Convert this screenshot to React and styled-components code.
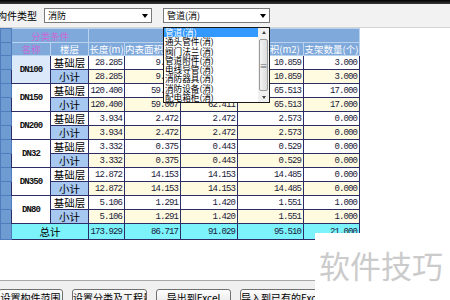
import React from "react";
import styled, { createGlobalStyle } from "styled-components";

const GlobalStyle = createGlobalStyle`
  html, body { margin: 0; padding: 0; }
  body {
    font-family: "Noto Sans CJK SC", "Noto Sans", sans-serif;
    background: #fff;
  }
`;

const Page = styled.div`
  width: 450px;
  height: 300px;
  position: relative;
  overflow: hidden;
  display: flex;
  flex-direction: column;
  background: #fff;
`;

const TopBar = styled.div`
  height: 4px;
  flex-shrink: 0;
  background: linear-gradient(#000, #3a3a3a);
`;

const Toolbar = styled.div`
  height: 24px;
  flex-shrink: 0;
  display: flex;
  align-items: center;
  background: #f2f2f2;
  border-bottom: 1px solid #d4d4d4;
  box-sizing: border-box;
`;

const Label = styled.span`
  font-size: 10px;
  width: 47px;
  margin-left: -3px;
  color: #000;
  white-space: nowrap;
`;

const Select = styled.div`
  width: ${(p) => p.$w}px;
  height: 15px;
  margin-right: ${(p) => p.$gap || 0}px;
  box-sizing: border-box;
  border: 1px solid #7a7a7a;
  background: #fff;
  display: flex;
  align-items: center;
  justify-content: space-between;
  padding: 0 3px 0 3px;
  font-size: 9px;
  color: #000;
`;

const Arrow = styled.span`
  width: 0;
  height: 0;
  border-left: 3px solid transparent;
  border-right: 3px solid transparent;
  border-top: 4px solid #000;
`;

const Grid = styled.table`
  border-collapse: collapse;
  table-layout: fixed;
  width: 359px;
  flex-shrink: 0;
`;

const HeadCell = styled.th`
  height: ${(p) => p.$h}px;
  padding: 0;
  background: #80a9db;
  border: 1px solid #b9d2ee;
  font-weight: normal;
  font-size: 9.5px;
  line-height: 10px;
  color: ${(p) => (p.$accent ? "#c86ad6" : "#fff")};
  white-space: nowrap;
  overflow: hidden;
  text-align: center;
`;

const RowHead = styled.td`
  padding: 0;
  background: #6f9bd3;
  border: 1px solid #4f7dbb;
`;

const NameCell = styled.td`
  padding: 0;
  background: ${(p) => (p.$selected ? "#dce9fb" : "#fff")};
  border: 1px solid #2c2c66;
  font-family: "Liberation Mono", monospace;
  font-size: 9px;
  font-weight: bold;
  letter-spacing: -0.9px;
  color: #111;
  text-align: center;
`;

const FloorCell = styled.td`
  height: 13px;
  padding: 0;
  background: ${(p) => (p.$sub ? "#a7c8f0" : "#fff")};
  border: 1px solid #2c2c66;
  font-size: 10.5px;
  line-height: 12px;
  color: #000;
  text-align: center;
`;

const NumCell = styled.td`
  padding: 0 2px 0 0;
  background: ${(p) => (p.$total ? "#7cf2fb" : p.$sub ? "#fffbe0" : "#fff")};
  border: 1px solid #2c2c66;
  font-family: "Liberation Mono", monospace;
  font-size: 9px;
  letter-spacing: -0.9px;
  color: #1a1a3a;
  text-align: right;
  white-space: nowrap;
`;

const TotalLabel = styled.td`
  height: 13px;
  padding: 0;
  background: #7cf2fb;
  border: 1px solid #2c2c66;
  font-size: 10.5px;
  color: #000;
  text-align: center;
`;

const Spacer = styled.div`
  flex: 1;
  background: #fff;
`;

const ButtonBar = styled.div`
  height: 20px;
  flex-shrink: 0;
  box-sizing: border-box;
  border-top: 1px solid #a8a8a8;
  background: #f0f0f0;
  display: flex;
  gap: 9px;
  padding: 8px 0 0 0;
  margin-left: -2px;
  overflow: visible;
`;

const Button = styled.div`
  width: ${(p) => p.$w}px;
  height: 18px;
  flex-shrink: 0;
  box-sizing: border-box;
  border: 1px solid #707070;
  border-radius: 3px;
  background: linear-gradient(#fdfdfd, #e6e6e6);
  font-size: 10px;
  line-height: 15px;
  text-align: center;
  color: #000;
  white-space: nowrap;
  overflow: hidden;
`;

const Dropdown = styled.div`
  position: absolute;
  left: 163px;
  top: 27px;
  width: 107px;
  height: 76px;
  box-sizing: border-box;
  border: 1px solid #1a1a1a;
  background: #fff;
  display: flex;
`;

const Options = styled.div`
  flex: 1;
  display: flex;
  flex-direction: column;
`;

const Option = styled.div`
  height: 9.25px;
  flex-shrink: 0;
  font-size: 8.6px;
  line-height: 9.25px;
  padding-left: 1px;
  color: ${(p) => (p.$active ? "#fff" : "#000")};
  background: ${(p) => (p.$active ? "#3399ff" : "transparent")};
  white-space: nowrap;
  overflow: hidden;
`;

const ScrollTrack = styled.div`
  width: 11px;
  background: #f0f0f0;
  display: flex;
  flex-direction: column;
  align-items: center;
  justify-content: space-between;
  padding: 3px 0;
  box-sizing: border-box;
`;

const ScrollThumb = styled.div`
  width: 9px;
  height: 52px;
  box-sizing: border-box;
  border: 1px solid #9a9a9a;
  border-radius: 2px;
  background: linear-gradient(90deg, #f4f4f4, #dcdcdc);
  display: flex;
  align-items: center;
  justify-content: center;
  font-size: 8px;
  color: #666;
`;

const TinyArrow = styled.span`
  width: 0;
  height: 0;
  border-left: 2px solid transparent;
  border-right: 2px solid transparent;
  ${(p) => (p.$up ? "border-bottom: 3px solid #444;" : "border-top: 3px solid #444;")}
`;

const Watermark = styled.div`
  position: absolute;
  left: 315px;
  top: 233px;
  width: 135px;
  height: 67px;
  background: #fff;
  font-size: 31px;
  line-height: 32px;
  color: #cbcbcb;
  padding: 16px 0 0 4px;
  box-sizing: border-box;
  white-space: nowrap;
`;

const groups = [
  { name: "DN100", vals: ["28.285", "9.419", "10.130", "10.859", "3.000"], selected: true },
  { name: "DN150", vals: ["120.400", "59.007", "62.411", "65.513", "17.000"] },
  { name: "DN200", vals: ["3.934", "2.472", "2.472", "2.573", "0.000"] },
  { name: "DN32", vals: ["3.332", "0.375", "0.443", "0.529", "0.000"] },
  { name: "DN350", vals: ["12.872", "14.153", "14.153", "14.485", "0.000"] },
  { name: "DN80", vals: ["5.106", "1.291", "1.420", "1.551", "1.000"] },
];

const totals = ["173.929", "86.717", "91.029", "95.510", "21.000"];

const colWidths = [11, 39, 38, 36, 56, 57, 66, 56];

const options = [
  "管道(消)",
  "通头管件(消)",
  "阀门法兰(消)",
  "管道附件(消)",
  "电线导管(消)",
  "消防器具(消)",
  "消防设备(消)",
  "配电箱柜(消)",
];

const App = () => (
  <Page>
    <GlobalStyle />
    <TopBar />
    <Toolbar>
      <Label>构件类型</Label>
      <Select $w={108} $gap={11}>
        <span>消防</span>
        <Arrow />
      </Select>
      <Select $w={107}>
        <span>管道(消)</span>
        <Arrow />
      </Select>
    </Toolbar>

    <Grid>
      <colgroup>
        {colWidths.map((w, i) => (
          <col key={i} style={{ width: w }} />
        ))}
      </colgroup>
      <thead>
        <tr>
          <RowHead />
          <HeadCell $h={13} $accent colSpan={2}>分类条件</HeadCell>
          <HeadCell $h={13} colSpan={5} />
        </tr>
        <tr>
          <RowHead />
          <HeadCell $h={12} $accent>名称</HeadCell>
          <HeadCell $h={12}>楼层</HeadCell>
          <HeadCell $h={12}>长度(m)</HeadCell>
          <HeadCell $h={12}>内表面积(m2)</HeadCell>
          <HeadCell $h={12}>外表面积(m2)</HeadCell>
          <HeadCell $h={12}>保温面积(m2)</HeadCell>
          <HeadCell $h={12}>支架数量(个)</HeadCell>
        </tr>
      </thead>
      <tbody>
        {groups.map((g) => (
          <React.Fragment key={g.name}>
            <tr>
              <RowHead />
              <NameCell rowSpan={2} $selected={g.selected}>{g.name}</NameCell>
              <FloorCell>基础层</FloorCell>
              {g.vals.map((v, i) => (
                <NumCell key={i}>{v}</NumCell>
              ))}
            </tr>
            <tr>
              <RowHead />
              <FloorCell $sub>小计</FloorCell>
              {g.vals.map((v, i) => (
                <NumCell key={i} $sub>{v}</NumCell>
              ))}
            </tr>
          </React.Fragment>
        ))}
        <tr>
          <RowHead />
          <TotalLabel colSpan={2}>总计</TotalLabel>
          {totals.map((v, i) => (
            <NumCell key={i} $total>{v}</NumCell>
          ))}
        </tr>
      </tbody>
    </Grid>

    <Spacer />
    <ButtonBar>
      <Button $w={65}>设置构件范围</Button>
      <Button $w={75}>设置分类及工程量</Button>
      <Button $w={75}>导出到Excel</Button>
      <Button $w={84}>导入到已有的Excel</Button>
    </ButtonBar>

    <Dropdown>
      <Options>
        {options.map((o, i) => (
          <Option key={o} $active={i === 0}>{o}</Option>
        ))}
      </Options>
      <ScrollTrack>
        <TinyArrow $up />
        <ScrollThumb>≡</ScrollThumb>
        <TinyArrow />
      </ScrollTrack>
    </Dropdown>

    <Watermark>软件技巧</Watermark>
  </Page>
);

export default App;
